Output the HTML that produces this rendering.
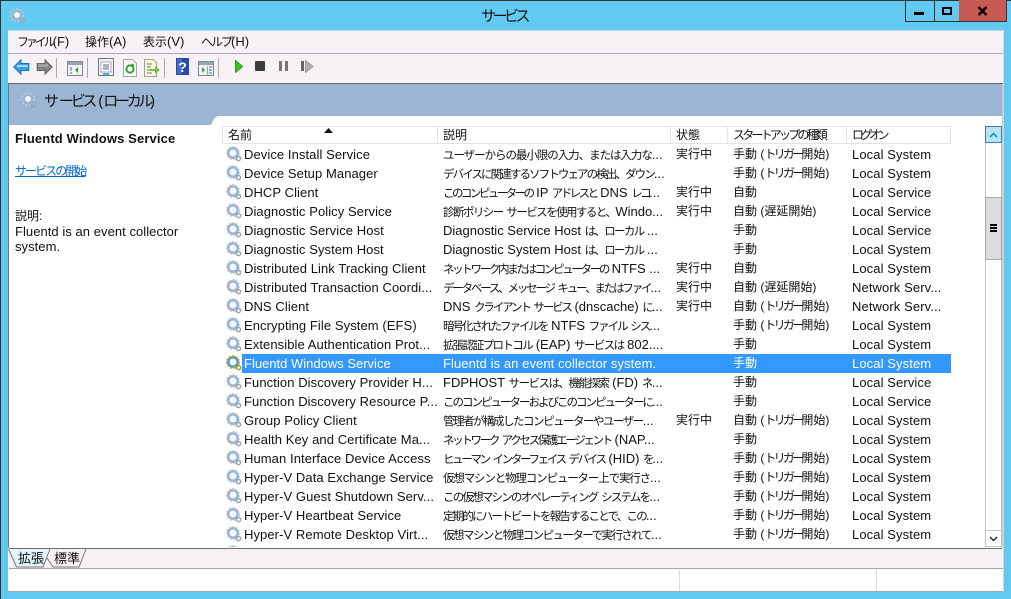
<!DOCTYPE html>
<html lang="ja"><head><meta charset="utf-8"><title>サービス</title>
<style>
html,body{margin:0;padding:0;width:1011px;height:599px;overflow:hidden;background:#62caf0}
body{position:relative;font-family:"Liberation Sans","Noto Sans CJK JP",sans-serif;font-size:13px;color:#111}
div,span,svg{position:absolute}
i{font-style:normal;font-size:11.5px;letter-spacing:var(--k,0)}
em{font-style:normal;letter-spacing:-2.75px}
.t{white-space:nowrap;line-height:19px;height:19px}
.r{left:0;width:1011px;height:19px}
.r span{white-space:nowrap;line-height:19px;top:0}
.n{left:244px;letter-spacing:.08px}.d{left:443px}.s{left:676px;font-size:12px}.u{left:733px;font-size:12px}.l{left:852px;letter-spacing:.1px}
.r svg{left:226px;top:1px}
.m{top:33px;line-height:18px;white-space:nowrap;font-size:13px}
.m i{font-size:12px}
.h{top:126px;line-height:19px;font-size:12px;white-space:nowrap}
.sep{top:127px;width:1px;height:17px;background:#e3e3e3}
.tb{top:58px;width:1px;height:20px;background:#a9a9a9}
</style></head><body>
<svg width="0" height="0" style="left:0;top:0"><defs>
<g id="gear"><circle cx="7" cy="7" r="4.7" fill="none" stroke="#9db5cc" stroke-width="2.6"/><circle cx="7" cy="7" r="6.3" fill="none" stroke="#bccde0" stroke-width="1.5" stroke-dasharray="2 1.6"/><circle cx="7" cy="7" r="2.9" fill="#f4f8fc"/><circle cx="12.5" cy="12.5" r="2.1" fill="none" stroke="#9aa4ae" stroke-width="1.5"/></g>
<g id="gearg"><circle cx="7" cy="7" r="4.7" fill="none" stroke="#6f97b8" stroke-width="2.6"/><circle cx="7" cy="7" r="6.3" fill="none" stroke="#9bc243" stroke-width="1.5" stroke-dasharray="2 1.6"/><circle cx="7" cy="7" r="2.9" fill="#f2f7fc"/><circle cx="12.5" cy="12.5" r="2.1" fill="none" stroke="#7fa83a" stroke-width="1.5"/></g>
</defs></svg>

<!-- title bar -->
<div style="left:0;top:0;width:1011px;height:1px;background:#333"></div>
<div style="left:0;top:0;width:1px;height:599px;background:#333"></div>
<svg style="left:10px;top:8px" width="17" height="17"><use href="#gear"/></svg>
<div class="t" style="left:481px;top:7px;font-size:15px;letter-spacing:-3.5px">サービス</div>
<div style="left:905px;top:0;width:28px;height:21px;border:1px solid #333;border-top:0"></div>
<div style="left:914px;top:12px;width:10px;height:3px;background:#000"></div>
<div style="left:933px;top:0;width:26px;height:21px;border:1px solid #333;border-top:0;border-left:0"></div>
<div style="left:942px;top:7px;width:6px;height:4px;border:2px solid #000"></div>
<div style="left:959px;top:0;width:47px;height:21px;background:#c75a52;border:1px solid #333;border-top:0;border-left:0"></div>
<svg style="left:977px;top:6px" width="11" height="10"><path d="M1.5 1L9.5 9M9.5 1L1.5 9" stroke="#000" stroke-width="2.4" fill="none"/></svg>

<!-- client -->
<div style="left:8px;top:30px;width:996px;height:562px;background:#fff;box-shadow:inset 0 1px 0 #c6d6e2"></div>
<div style="left:8px;top:31px;width:996px;height:53px;background:#f6f2f6"></div>
<div style="left:8px;top:53px;width:996px;height:1px;background:#aeaab4"></div>
<div class="m" style="left:17px"><i style="--k:-3.1px">ファイル</i>(F)</div>
<div class="m" style="left:85px"><i>操作</i>(A)</div>
<div class="m" style="left:143px"><i>表示</i>(V)</div>
<div class="m" style="left:201px"><i style="--k:-2px">ヘルプ</i>(H)</div>

<!-- toolbar -->
<svg style="left:13px;top:59px" width="17" height="16"><path d="M.8 8L8 .8V4.5H15.8V11.5H8V15.2Z" fill="#3aa0ea" stroke="#1f6fb8"/><path d="M4 7H15" stroke="#a5dcff" stroke-width="2"/></svg>
<svg style="left:36px;top:59px" width="17" height="16"><path d="M16.2 8L9 .8V4.5H1.2V11.5H9V15.2Z" fill="#858585" stroke="#666"/><path d="M2 6.5H12" stroke="#aaa" stroke-width="2"/></svg>
<div class="tb" style="left:56px"></div>
<svg style="left:67px;top:61px" width="17" height="16"><rect x=".5" y=".5" width="15" height="14" fill="#f2f2f2" stroke="#7c8792"/><rect x="1" y="1" width="14" height="3" fill="#9aa4ae"/><path d="M11 6L8 9L11 12Z" fill="#2fa52f"/><path d="M3 7H5M3 9H5M3 12H5" stroke="#3f6fae"/></svg>
<div class="tb" style="left:87px"></div>
<svg style="left:98px;top:58px" width="17" height="19"><rect x=".5" y=".5" width="15" height="17" fill="#f1f1f4" stroke="#6f7680"/><rect x="3" y="4" width="10" height="10" fill="#fff" stroke="#aab"/><path d="M5 7H11M5 9H11M5 11H11" stroke="#668"/><rect x="5" y="15" width="6" height="2" fill="#45b5e8"/></svg>
<svg style="left:123px;top:59px" width="14" height="18"><path d="M.5.5H9.5L13.5 4.5V17.5H.5Z" fill="#fbfbfb" stroke="#a5a5a5"/><circle cx="7" cy="10" r="3.6" fill="none" stroke="#38a238" stroke-width="2"/><path d="M9 4L12 7H8Z" fill="#38a238"/></svg>
<svg style="left:144px;top:59px" width="17" height="18"><path d="M.5.5H9.5L12.5 3.5V17.5H.5Z" fill="#fdf6dc" stroke="#a5a08c"/><path d="M3 5H8M3 8H7M3 11H7M3 14H8" stroke="#777"/><path d="M6 10H11V7L16 11L11 15V12H6Z" fill="#68c34a"/></svg>
<div class="tb" style="left:164px"></div>
<svg style="left:176px;top:58px" width="13" height="17"><rect width="13" height="17" fill="#2b48a8"/><rect x="1" y="1" width="5" height="15" fill="#4a68c8"/><text x="6.5" y="14" font-family="Liberation Sans" font-size="14" font-weight="bold" fill="#fff" text-anchor="middle">?</text></svg>
<svg style="left:198px;top:61px" width="17" height="16"><rect x=".5" y=".5" width="15" height="14" fill="#f2f2f2" stroke="#7c8792"/><rect x="1" y="1" width="14" height="3" fill="#9aa4ae"/><path d="M4 6L7 9L4 12Z" fill="#2fa52f"/><path d="M9.5 5V14" stroke="#9ba6b0"/><path d="M11 6H14M11 9H14M11 12H14" stroke="#3f6fae"/></svg>
<div class="tb" style="left:218px"></div>
<svg style="left:235px;top:60px" width="8" height="13"><path d="M.5 .5L7.5 6.5L.5 12.5Z" fill="#3fbf28" stroke="#2a9a1c"/></svg>
<div style="left:255px;top:61px;width:10px;height:10px;background:#3c3c3c;border-radius:1px"></div>
<div style="left:279px;top:61px;width:3px;height:10px;background:#777"></div>
<div style="left:285px;top:61px;width:3px;height:10px;background:#777"></div>
<div style="left:301px;top:61px;width:3px;height:10px;background:#666"></div>
<svg style="left:305px;top:60px" width="9" height="13"><path d="M.5 .5L8 6.5L.5 12.5Z" fill="#b0b0b0" stroke="#999"/></svg>

<!-- band -->
<div style="left:8px;top:83px;width:995px;height:1px;background:#6d6b70"></div>
<div style="left:8px;top:84px;width:1px;height:464px;background:#70747a"></div>
<div style="left:1002px;top:84px;width:1px;height:464px;background:#c8c8cc"></div>
<svg style="left:9px;top:84px" width="993" height="42"><path d="M0 0H993V32H209Q206 33 205 35L202 41H0Z" fill="#9bb5d3"/></svg>
<svg style="left:21px;top:92px" width="17" height="17"><use href="#gear"/></svg>
<div class="t" style="left:44px;top:92px;font-size:15px">サ<i style="font-size:15px;--k:-3.3px">ービス</i> (<i style="font-size:15px;--k:-3.3px">ローカル</i>)</div>

<!-- left panel -->
<div class="t" style="left:15px;top:129px;font-weight:bold;letter-spacing:.13px">Fluentd Windows Service</div>
<div class="t" style="left:15px;top:162px;font-size:12px;letter-spacing:-1.95px;color:#0066cc;text-decoration:underline">サービスの開始</div>
<div class="t" style="left:15px;top:207px;font-size:12px">説明:</div>
<div class="t" style="left:15px;top:222px;letter-spacing:.05px">Fluentd is an event collector</div>
<div class="t" style="left:15px;top:237px;letter-spacing:.05px">system.</div>

<!-- header -->
<div style="left:222px;top:126px;width:729px;height:18px;border-top:1px solid #e3e3e3;border-bottom:1px solid #e3e3e3;box-sizing:border-box"></div>
<div style="left:222px;top:127px;width:1px;height:17px;background:#e3e3e3"></div>
<div class="sep" style="left:437px"></div>
<div class="sep" style="left:670px"></div>
<div class="sep" style="left:727px"></div>
<div class="sep" style="left:846px"></div>
<div class="sep" style="left:950px"></div>
<div class="h" style="left:228px">名前</div>
<svg style="left:324px;top:128px" width="9" height="5"><path d="M0 5L4.5 0L9 5Z" fill="#111"/></svg>
<div class="h" style="left:443px">説明</div>
<div class="h" style="left:676px">状態</div>
<div class="h" style="left:733px;letter-spacing:-2.8px">スタートアップの種類</div>
<div class="h" style="left:852px;letter-spacing:-3.5px">ログオン</div>

<!-- rows -->
<div style="left:222px;top:145px;width:729px;height:402px;overflow:hidden">
<div style="left:-222px;top:-145px;width:1011px;height:547px">
<div style="left:242px;top:354px;width:709px;height:19px;background:#3399ff"></div>
<div class="r" style="top:145px"><svg width="17" height="17"><use href="#gear"/></svg><span class="n">Device Install Service</span><span class="d" style="--k:-1.05px"><i>ユーザーからの最小限の入力、または入力な</i>...</span><span class="s">実行中</span><span class="u">手動 (<em>トリガー</em>開始)</span><span class="l">Local System</span></div>
<div class="r" style="top:164px"><svg width="17" height="17"><use href="#gear"/></svg><span class="n">Device Setup Manager</span><span class="d" style="--k:-1.9px"><i>デバイスに関連するソフトウェアの検出、ダウン</i>...</span><span class="u">手動 (<em>トリガー</em>開始)</span><span class="l">Local System</span></div>
<div class="r" style="top:183px"><svg width="17" height="17"><use href="#gear"/></svg><span class="n">DHCP Client</span><span class="d" style="--k:-2.55px"><i>このコンピューターの</i> IP <i>アドレスと</i> DNS <i>レコ</i>...</span><span class="s">実行中</span><span class="u">自動</span><span class="l">Local Service</span></div>
<div class="r" style="top:202px"><svg width="17" height="17"><use href="#gear"/></svg><span class="n">Diagnostic Policy Service</span><span class="d" style="--k:-1.55px"><i>診断ポリシー</i> <i>サービスを使用すると、</i>Windo...</span><span class="s">実行中</span><span class="u">自動 (遅延開始)</span><span class="l">Local Service</span></div>
<div class="r" style="top:221px"><svg width="17" height="17"><use href="#gear"/></svg><span class="n">Diagnostic Service Host</span><span class="d" style="--k:-1.7px">Diagnostic Service Host <i>は、ローカル</i> ...</span><span class="u">手動</span><span class="l">Local Service</span></div>
<div class="r" style="top:240px"><svg width="17" height="17"><use href="#gear"/></svg><span class="n">Diagnostic System Host</span><span class="d" style="--k:-1.7px">Diagnostic System Host <i>は、ローカル</i> ...</span><span class="u">手動</span><span class="l">Local System</span></div>
<div class="r" style="top:259px"><svg width="17" height="17"><use href="#gear"/></svg><span class="n">Distributed Link Tracking Client</span><span class="d" style="--k:-2.33px"><i>ネットワーク内またはコンピューターの</i> NTFS ...</span><span class="s">実行中</span><span class="u">自動</span><span class="l">Local System</span></div>
<div class="r" style="top:278px"><svg width="17" height="17"><use href="#gear"/></svg><span class="n">Distributed Transaction Coordi...</span><span class="d" style="--k:-2.2px"><i>データベース、メッセージ</i> <i>キュー、またはファイ</i>...</span><span class="s">実行中</span><span class="u">自動 (遅延開始)</span><span class="l">Network Serv...</span></div>
<div class="r" style="top:297px"><svg width="17" height="17"><use href="#gear"/></svg><span class="n">DNS Client</span><span class="d" style="--k:-2.14px">DNS <i>クライアント</i> <i>サービス</i> (dnscache) <i>に</i>...</span><span class="s">実行中</span><span class="u">自動 (<em>トリガー</em>開始)</span><span class="l">Network Serv...</span></div>
<div class="r" style="top:316px"><svg width="17" height="17"><use href="#gear"/></svg><span class="n">Encrypting File System (EFS)</span><span class="d" style="--k:-2px"><i>暗号化されたファイルを</i> NTFS <i>ファイル</i> <i>シス</i>...</span><span class="u">手動 (<em>トリガー</em>開始)</span><span class="l">Local System</span></div>
<div class="r" style="top:335px"><svg width="17" height="17"><use href="#gear"/></svg><span class="n">Extensible Authentication Prot...</span><span class="d" style="--k:-1.6px"><i>拡張認証プロトコル</i> (EAP) <i>サービスは</i> 802....</span><span class="u">手動</span><span class="l">Local System</span></div>
<div class="r" style="top:354px;color:#fff"><svg width="17" height="17"><use href="#gearg"/></svg><span class="n" style="letter-spacing:0">Fluentd Windows Service</span><span class="d" style="letter-spacing:.08px">Fluentd is an event collector system.</span><span class="u">手動</span><span class="l">Local System</span></div>
<div class="r" style="top:373px"><svg width="17" height="17"><use href="#gear"/></svg><span class="n">Function Discovery Provider H...</span><span class="d" style="--k:-1.5px">FDPHOST <i>サービスは、機能探索</i> (FD) <i>ネ</i>...</span><span class="u">手動</span><span class="l">Local Service</span></div>
<div class="r" style="top:392px"><svg width="17" height="17"><use href="#gear"/></svg><span class="n">Function Discovery Resource P...</span><span class="d" style="--k:-2px"><i>このコンピューターおよびこのコンピューターに</i>...</span><span class="u">手動</span><span class="l">Local Service</span></div>
<div class="r" style="top:411px"><svg width="17" height="17"><use href="#gear"/></svg><span class="n">Group Policy Client</span><span class="d" style="--k:-1.5px"><i>管理者が構成したコンピューターやユーザー</i>...</span><span class="s">実行中</span><span class="u">自動 (<em>トリガー</em>開始)</span><span class="l">Local System</span></div>
<div class="r" style="top:430px"><svg width="17" height="17"><use href="#gear"/></svg><span class="n">Health Key and Certificate Ma...</span><span class="d" style="--k:-2.33px"><i>ネットワーク</i> <i>アクセス保護エージェント</i> (NAP...</span><span class="u">手動</span><span class="l">Local System</span></div>
<div class="r" style="top:449px"><svg width="17" height="17"><use href="#gear"/></svg><span class="n">Human Interface Device Access</span><span class="d" style="--k:-2.33px"><i>ヒューマン</i> <i>インターフェイス</i> <i>デバイス</i> (HID) <i>を</i>...</span><span class="u">手動 (<em>トリガー</em>開始)</span><span class="l">Local System</span></div>
<div class="r" style="top:468px"><svg width="17" height="17"><use href="#gear"/></svg><span class="n">Hyper-V Data Exchange Service</span><span class="d" style="--k:-1.15px"><i>仮想マシンと物理コンピューター上で実行さ</i>...</span><span class="u">手動 (<em>トリガー</em>開始)</span><span class="l">Local System</span></div>
<div class="r" style="top:487px"><svg width="17" height="17"><use href="#gear"/></svg><span class="n">Hyper-V Guest Shutdown Serv...</span><span class="d" style="--k:-1.8px"><i>この仮想マシンのオペレーティング</i> <i>システムを</i>...</span><span class="u">手動 (<em>トリガー</em>開始)</span><span class="l">Local System</span></div>
<div class="r" style="top:506px"><svg width="17" height="17"><use href="#gear"/></svg><span class="n">Hyper-V Heartbeat Service</span><span class="d" style="--k:-1.8px"><i>定期的にハートビートを報告することで、この</i>...</span><span class="u">手動 (<em>トリガー</em>開始)</span><span class="l">Local System</span></div>
<div class="r" style="top:525px"><svg width="17" height="17"><use href="#gear"/></svg><span class="n">Hyper-V Remote Desktop Virt...</span><span class="d" style="--k:-1.55px"><i>仮想マシンと物理コンピューターで実行されて</i>...</span><span class="u">手動 (<em>トリガー</em>開始)</span><span class="l">Local System</span></div>
<div class="r" style="top:544px;height:3px;overflow:hidden"><svg width="17" height="17"><use href="#gear"/></svg></div>
</div></div>

<!-- scrollbar -->
<div style="left:985px;top:126px;width:17px;height:421px;box-sizing:border-box;border-left:1px solid #c4c4c4;border-right:1px solid #c4c4c4;background:#fff"></div>
<div style="left:985px;top:126px;width:17px;height:17px;box-sizing:border-box;background:#b8e2fa;border:1px solid #3c7fb1"></div>
<svg style="left:989px;top:132px" width="9" height="6"><path d="M1 5L4.5 1.5L8 5" fill="none" stroke="#0a9ac8" stroke-width="1.6"/></svg>
<div style="left:985px;top:197px;width:17px;height:63px;box-sizing:border-box;background:#dcdcdc;border:1px solid #a8a8a8"></div>
<div style="left:990px;top:224px;width:7px;height:2px;background:#000"></div>
<div style="left:990px;top:227px;width:7px;height:2px;background:#000"></div>
<div style="left:990px;top:230px;width:7px;height:2px;background:#000"></div>
<div style="left:985px;top:530px;width:17px;height:17px;box-sizing:border-box;background:#fff;border:1px solid #c4c4c4"></div>
<svg style="left:989px;top:536px" width="9" height="6"><path d="M1 1L4.5 4.5L8 1" fill="none" stroke="#222" stroke-width="1.4"/></svg>

<!-- tabs -->
<div style="left:9px;top:548px;width:993px;height:1px;background:#6d6d6d"></div>
<div style="left:9px;top:549px;width:993px;height:19px;background:#f5f1f5"></div>
<svg style="left:8px;top:548px" width="80" height="21"><path d="M0.5 1L8.5 19H35L42 1Z" fill="#e4f5fe"/><path d="M0.5 1L8.5 19H35L42 1" fill="none" stroke="#777"/><path d="M39 10L45 19H71L78 1" fill="none" stroke="#777"/></svg>
<div class="t" style="left:18px;top:549px;font-size:13px">拡張</div>
<div class="t" style="left:54px;top:549px;font-size:13px">標準</div>
<div style="left:9px;top:568px;width:994px;height:1px;background:#a5a5a5"></div>

<!-- status -->
<div style="left:9px;top:569px;width:994px;height:22px;background:#fff"></div>
<div style="left:679px;top:570px;width:1px;height:21px;background:#dcdcdc"></div>
<div style="left:876px;top:570px;width:1px;height:21px;background:#dcdcdc"></div>
<div style="left:8px;top:591px;width:996px;height:1px;background:#a5a5a5"></div>
<div style="left:1003px;top:31px;width:1px;height:561px;background:#c9d9e4"></div>
</body></html>
